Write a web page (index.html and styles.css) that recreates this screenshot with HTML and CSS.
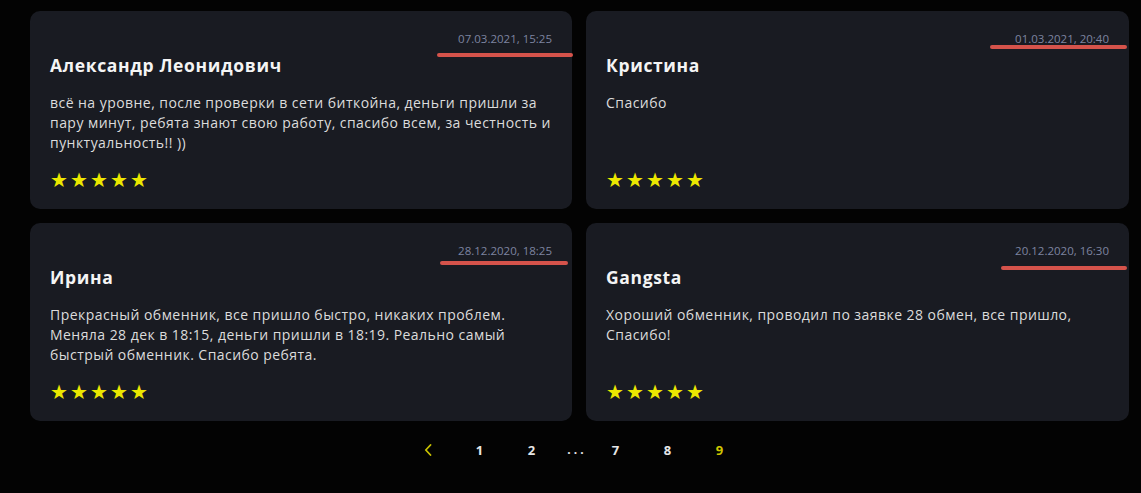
FILE: index.html
```html
<!DOCTYPE html>
<html lang="ru">
<head>
<meta charset="utf-8">
<title>Отзывы</title>
<link rel="stylesheet" href="styles.css">
</head>
<body>
<main class="page">
  <section class="reviews">
    <article class="card">
      <div class="date">07.03.2021, 15:25</div>
      <h3 class="name">Александр Леонидович</h3>
      <p class="text">всё на уровне, после проверки в сети биткойна, деньги пришли за пару минут, ребята знают свою работу, спасибо всем, за честность и пунктуальность!! ))</p>
      <div class="stars">★★★★★</div>
      <span class="mark mark-1"></span>
    </article>
    <article class="card">
      <div class="date">01.03.2021, 20:40</div>
      <h3 class="name">Кристина</h3>
      <p class="text">Спасибо</p>
      <div class="stars">★★★★★</div>
      <span class="mark mark-2"></span>
    </article>
    <article class="card">
      <div class="date">28.12.2020, 18:25</div>
      <h3 class="name">Ирина</h3>
      <p class="text">Прекрасный обменник, все пришло быстро, никаких проблем. Меняла 28 дек в 18:15, деньги пришли в 18:19. Реально самый быстрый обменник. Спасибо ребята.</p>
      <div class="stars">★★★★★</div>
      <span class="mark mark-3"></span>
    </article>
    <article class="card">
      <div class="date">20.12.2020, 16:30</div>
      <h3 class="name">Gangsta</h3>
      <p class="text">Хороший обменник, проводил по заявке 28 обмен, все пришло, Спасибо!</p>
      <div class="stars">★★★★★</div>
      <span class="mark mark-4"></span>
    </article>
  </section>
  <nav class="pager">
    <span class="pg pg-prev"><svg width="8" height="12" viewBox="0 0 8 12"><path d="M6.5 1 L1.8 6 L6.5 11" fill="none" stroke="currentColor" stroke-width="1.8" stroke-linecap="round" stroke-linejoin="round"/></svg></span>
    <span class="pg">1</span>
    <span class="pg">2</span>
    <span class="pg pg-dots">. . .</span>
    <span class="pg">7</span>
    <span class="pg">8</span>
    <span class="pg pg-active">9</span>
  </nav>
</main>
</body>
</html>
```
FILE: styles.css
```css
* { box-sizing: border-box; }
html, body { margin: 0; padding: 0; }
body {
  background: #030303;
  font-family: "Open Sans", "Noto Sans", sans-serif;
  width: 1141px;
  height: 493px;
  overflow: hidden;
}
.page {
  padding-top: 11px;
}
.reviews {
  margin-left: 30px;
  display: grid;
  grid-template-columns: 542px 543px;
  grid-auto-rows: 198px;
  column-gap: 14px;
  row-gap: 14px;
}
.card {
  position: relative;
  background: #191b22;
  border-radius: 10px;
  padding: 20px 20px 20px 20px;
  display: flex;
  flex-direction: column;
}
.date {
  align-self: flex-end;
  font-size: 11.5px;
  line-height: 15px;
  color: #7d84a0;
}
.name {
  margin: 8px 0 0 0;
  font-size: 17.5px;
  line-height: 22px;
  font-weight: 700;
  color: #f4f4f4;
  letter-spacing: 0.65px;
}
.text {
  margin: 17px -4px 0 0;
  font-size: 14px;
  line-height: 20px;
  color: #dcdcdc;
  letter-spacing: 0.45px;
}
.stars {
  margin-top: auto;
  font-size: 20px;
  line-height: 18px;
  letter-spacing: 2.1px;
  color: #ece800;
  font-family: "DejaVu Sans", sans-serif;
}
.mark {
  position: absolute;
  height: 4px;
  border-radius: 2px;
  background: #d5534b;
}
.mark-1 { left: 407px; width: 136px; top: 42px; }
.mark-2 { left: 404px; width: 137px; top: 34px; }
.mark-3 { left: 410px; width: 128px; top: 38px; }
.mark-4 { left: 415px; width: 126px; top: 43px; }
.pager {
  display: flex;
  justify-content: center;
  align-items: center;
  padding-left: 6px;
  margin-top: 18px;
  height: 22px;
}
.pg {
  width: 52px;
  text-align: center;
  font-size: 13px;
  font-weight: 700;
  color: #e6e6e6;
  line-height: 22px;
}
.pg-prev { color: #c9c200; display: flex; justify-content: center; align-items: center; }
.pg-dots { width: 28px; margin-left: 4px; font-size: 12px; letter-spacing: 0; }
.pg-active { color: #cfc500; }
```
